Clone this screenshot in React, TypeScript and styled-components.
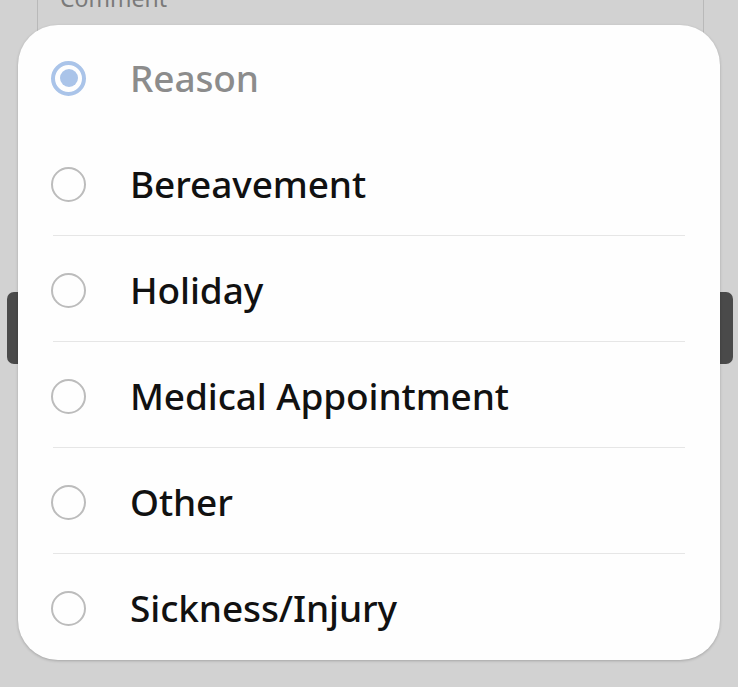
import React, { useState } from "react";
import styled, { createGlobalStyle } from "styled-components";

const Global = createGlobalStyle`
  html, body { margin: 0; padding: 0; background: #d2d2d2; }
  body { font-family: "Noto Sans", "Open Sans", sans-serif; }
  * { box-sizing: border-box; }
`;

const Screen = styled.div`
  position: relative;
  width: 738px;
  height: 687px;
  overflow: hidden;
  background: #d2d2d2;
  padding: 0 34px 0 37px;
`;

const CommentField = styled.div`
  height: 200px;
  margin-top: -20px;
  border-left: 1px solid #b9b9b9;
  border-right: 1px solid #b9b9b9;
  padding: 0 0 0 22px;
`;

const FieldLabel = styled.div`
  font-size: 23px;
  line-height: 24px;
  color: #7a7a7a;
  padding-top: 6px;
`;

const SideTab = styled.div<{ $side: "left" | "right" }>`
  position: absolute;
  top: 292px;
  ${(p) => (p.$side === "left" ? "left: 7px;" : "right: 5px;")}
  width: 30px;
  height: 72px;
  border-radius: 7px;
  background: #4a4a4a;
`;

const Overlay = styled.div`
  position: absolute;
  inset: 0;
  padding: 25px 18px 0 18px;
`;

const Card = styled.div`
  width: 702px;
  height: 635px;
  background: #fefefe;
  border-radius: 40px;
  box-shadow: 0 1px 3px rgba(0, 0, 0, 0.22);
  display: flex;
  flex-direction: column;
  overflow: hidden;
`;

const Row = styled.div<{ $divider: boolean }>`
  height: 106px;
  flex: 0 0 auto;
  display: flex;
  align-items: center;
  padding-left: 33px;
  position: relative;
  cursor: pointer;
  &::after {
    content: "";
    display: ${(p) => (p.$divider ? "block" : "none")};
    position: absolute;
    left: 35px;
    right: 35px;
    bottom: 1px;
    height: 1px;
    background: #e6e6e6;
  }
`;

const Radio = styled.span<{ $checked: boolean }>`
  width: 35px;
  height: 35px;
  flex: 0 0 35px;
  border-radius: 50%;
  border: ${(p) => (p.$checked ? "4px solid #aac4e9" : "2.5px solid #bcbcbc")};
  display: flex;
  align-items: center;
  justify-content: center;
  &::before {
    content: "";
    display: ${(p) => (p.$checked ? "block" : "none")};
    width: 18px;
    height: 18px;
    border-radius: 50%;
    background: #aac4e9;
  }
`;

const Label = styled.span<{ $muted: boolean }>`
  margin-left: 44px;
  margin-top: -2px;
  font-size: 37px;
  font-weight: 500;
  line-height: 1;
  letter-spacing: -0.1px;
  color: ${(p) => (p.$muted ? "#8c8c8c" : "#111111")};
`;

const options = [
  "Reason",
  "Bereavement",
  "Holiday",
  "Medical Appointment",
  "Other",
  "Sickness/Injury",
];

export default function App() {
  const [selected, setSelected] = useState(0);
  return (
    <>
      <Global />
      <Screen>
        <CommentField>
          <FieldLabel>Comment</FieldLabel>
        </CommentField>
        <SideTab $side="left" />
        <SideTab $side="right" />
        <Overlay>
          <Card>
            {options.map((o, i) => (
              <Row
                key={o}
                $divider={i >= 1 && i < options.length - 1}
                onClick={() => setSelected(i)}
              >
                <Radio $checked={selected === i} />
                <Label $muted={i === 0}>{o}</Label>
              </Row>
            ))}
          </Card>
        </Overlay>
      </Screen>
    </>
  );
}
